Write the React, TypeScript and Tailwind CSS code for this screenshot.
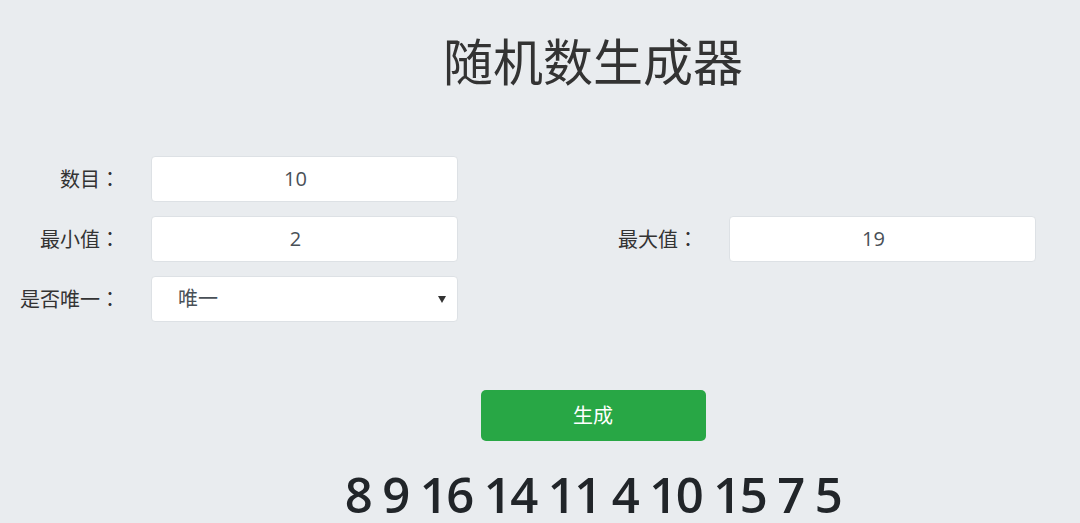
import React from "react";

const cjk = "font-['Open_Sans','Noto_Sans_CJK_SC',sans-serif]";

function Label({ text }: { text: string }) {
  return (
    <div className="w-[120px] shrink-0 text-right text-[20px] text-[#333] leading-[46px]">
      {text}
      <span className="font-['Noto_Sans_CJK_TC',sans-serif]">：</span>
    </div>
  );
}

function Field({ value }: { value: string }) {
  return (
    <div className="ml-[31px] flex h-[46px] w-[307px] items-center justify-center rounded-[4px] border border-[#dde1e5] bg-white pr-[18px] text-[20px] text-[#495057]">
      {value}
    </div>
  );
}

function Group({ label, children }: { label: string; children: React.ReactNode }) {
  return (
    <div className="flex h-[46px] w-[578px] items-center">
      <Label text={label} />
      {children}
    </div>
  );
}

export default function App() {
  const nums = [8, 9, 16, 14, 11, 4, 10, 15, 7, 5];
  return (
    <div className={`h-[523px] w-full overflow-hidden bg-[#e9ecef] ${cjk}`}>
      <div className="w-[1186px]">
        <h1 className="pt-[26px] text-center text-[50px] leading-[72px] font-normal text-[#333]">
          随机数生成器
        </h1>
        <div className="mt-[58px] flex flex-col gap-[14px]">
          <div className="flex">
            <Group label="数目">
              <Field value="10" />
            </Group>
          </div>
          <div className="flex">
            <Group label="最小值">
              <Field value="2" />
            </Group>
            <Group label="最大值">
              <Field value="19" />
            </Group>
          </div>
          <div className="flex">
            <Group label="是否唯一">
              <div className="relative ml-[31px] flex h-[46px] w-[307px] items-center rounded-[4px] border border-[#dde1e5] bg-white pl-[26px] text-[20px] text-[#495057]">
                唯一
                <svg className="absolute right-[11px] top-[19px]" width="8" height="7" viewBox="0 0 8 7">
                  <path d="M0 0 H8 L4 7 Z" fill="#333" />
                </svg>
              </div>
            </Group>
          </div>
        </div>
        <div className="mt-[68px] flex justify-center">
          <button className="h-[51px] w-[225px] rounded-[5px] bg-[#28a745] text-[20px] text-white">
            生成
          </button>
        </div>
        <div className="mt-[23px] text-center font-['Open_Sans',sans-serif] text-[49px] leading-[60px] font-semibold tracking-[-1.6px] text-[#212529]">
          {nums.join(" ")}
        </div>
      </div>
    </div>
  );
}
